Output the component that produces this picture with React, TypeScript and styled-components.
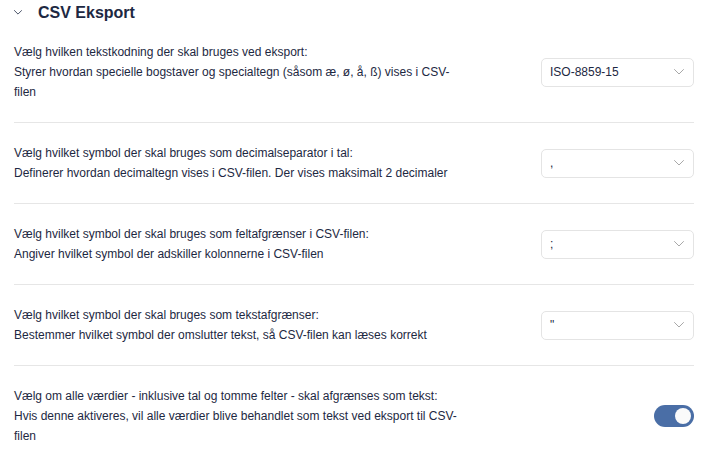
import React, { useState } from 'react'
import styled, { createGlobalStyle } from 'styled-components'

const GlobalStyle = createGlobalStyle`
    html, body {
        margin: 0;
        padding: 0;
        background: #fff;
    }
    body {
        font-family: "Liberation Sans", Arial, sans-serif;
        color: #1d2842;
    }
`

const Section = styled.section`
    padding: 0 11px 0 14px;
`

const Header = styled.div`
    box-sizing: border-box;
    display: flex;
    align-items: center;
    gap: 16px;
    height: 22px;
    padding-top: 3px;
`

const Title = styled.h2`
    margin: 0;
    font-size: 16px;
    line-height: 19px;
    font-weight: 700;
    color: #1d2842;
`

const Row = styled.div<{ $last?: boolean }>`
    display: flex;
    align-items: center;
    justify-content: space-between;
    padding: 20px 0;
    border-bottom: ${({ $last }) => ($last ? 'none' : '1px solid #e6e6e6')};
`

const Texts = styled.div`
    max-width: 455px;
    font-size: 12px;
    line-height: 20px;
`

const Label = styled.div``

const Description = styled.div``

const SelectBox = styled.div`
    box-sizing: border-box;
    width: 153px;
    height: 29px;
    display: flex;
    align-items: center;
    justify-content: space-between;
    padding: 0 9px 0 8px;
    border: 1px solid #e4e4e4;
    border-radius: 5px;
    font-size: 12px;
    color: #1d2842;
    background: #fff;
`

const Toggle = styled.button<{ $on: boolean }>`
    position: relative;
    width: 40px;
    height: 22px;
    border: none;
    padding: 0;
    border-radius: 11px;
    background: ${({ $on }) => ($on ? '#4a6ea6' : '#cfd4dc')};
    cursor: pointer;
    &::after {
        content: "";
        position: absolute;
        top: 3px;
        left: ${({ $on }) => ($on ? '21px' : '3px')};
        width: 16px;
        height: 16px;
        border-radius: 50%;
        background: #fafafa;
        transition: left 0.2s;
    }
`

const Chevron = ({ size = 10, color = '#a8a8a8' }: { size?: number; color?: string }) => (
    <svg width={size} height={size / 2 + 1} viewBox="0 0 10 6" fill="none">
        <path d="M0.5 0.5 L5 5 L9.5 0.5" stroke={color} strokeWidth="1" strokeLinecap="round" strokeLinejoin="round" />
    </svg>
)

const Select = ({ value }: { value: string }) => (
    <SelectBox>
        <span>{value}</span>
        <Chevron />
    </SelectBox>
)

const rows = [
    {
        label: 'Vælg hvilken tekstkodning der skal bruges ved eksport:',
        desc: 'Styrer hvordan specielle bogstaver og specialtegn (såsom æ, ø, å, ß) vises i CSV-filen',
        value: 'ISO-8859-15',
    },
    {
        label: 'Vælg hvilket symbol der skal bruges som decimalseparator i tal:',
        desc: 'Definerer hvordan decimaltegn vises i CSV-filen. Der vises maksimalt 2 decimaler',
        value: ',',
    },
    {
        label: 'Vælg hvilket symbol der skal bruges som feltafgrænser i CSV-filen:',
        desc: 'Angiver hvilket symbol der adskiller kolonnerne i CSV-filen',
        value: ';',
    },
    {
        label: 'Vælg hvilket symbol der skal bruges som tekstafgrænser:',
        desc: 'Bestemmer hvilket symbol der omslutter tekst, så CSV-filen kan læses korrekt',
        value: '"',
    },
]

const App = () => {
    const [quoteAll, setQuoteAll] = useState(true)
    return (
        <>
            <GlobalStyle />
            <Section>
                <Header>
                    <Chevron size={8} color="#1d2842" />
                    <Title>CSV Eksport</Title>
                </Header>
                {rows.map((r) => (
                    <Row key={r.label}>
                        <Texts>
                            <Label>{r.label}</Label>
                            <Description>{r.desc}</Description>
                        </Texts>
                        <Select value={r.value} />
                    </Row>
                ))}
                <Row $last>
                    <Texts>
                        <Label>Vælg om alle værdier - inklusive tal og tomme felter - skal afgrænses som tekst:</Label>
                        <Description>
                            Hvis denne aktiveres, vil alle værdier blive behandlet som tekst ved eksport til CSV-filen
                        </Description>
                    </Texts>
                    <Toggle $on={quoteAll} onClick={() => setQuoteAll(!quoteAll)} aria-label="toggle" />
                </Row>
            </Section>
        </>
    )
}

export default App
